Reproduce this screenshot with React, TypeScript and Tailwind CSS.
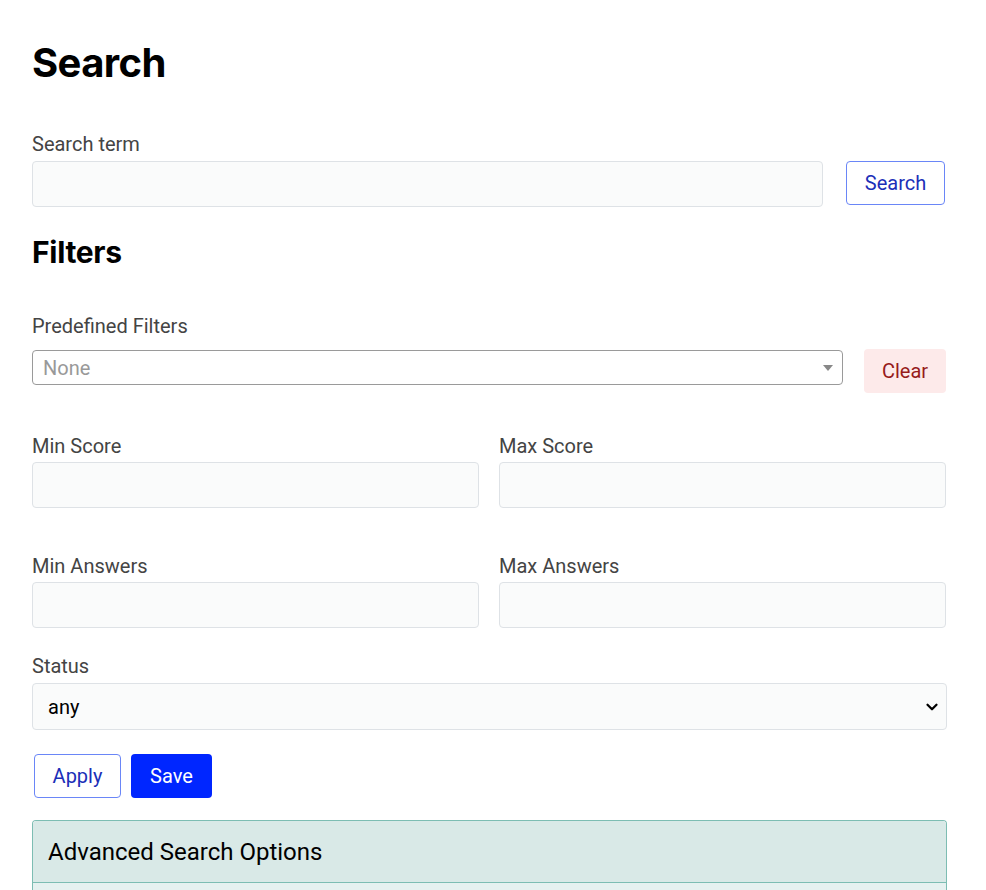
import { ChevronDown } from "lucide-react";

const body = { fontFamily: "Roboto, 'Liberation Sans', sans-serif" };
const heading = { fontFamily: "Inter, 'Liberation Sans', sans-serif" };

function Field({ label }: { label: string }) {
  return (
    <div className="flex flex-col">
      <label className="text-[20px] leading-6 text-[#444]">{label}</label>
      <input className="mt-[4px] h-[46px] rounded border border-[#dee2e6] bg-[#fafbfb] px-3 outline-none" />
    </div>
  );
}

export default function App() {
  return (
    <div className="min-h-screen bg-white px-8 pt-[39px]" style={body}>
      <h1 className="text-[40px] font-bold leading-[48px] tracking-[-0.6px] text-black" style={heading}>
        Search
      </h1>

      <div className="mt-[45px] text-[20px] leading-6 text-[#444]">Search term</div>
      <div className="mt-[5px] flex items-start">
        <input className="h-[46px] flex-1 rounded border border-[#dee2e6] bg-[#fafbfb] px-3 outline-none" />
        <button className="ml-[23px] mr-[9px] h-[44px] w-[99px] rounded border border-[#6a86f7] text-[20px] text-[#1c2fb8]">
          Search
        </button>
      </div>

      <h2 className="mt-[27px] text-[30px] font-bold leading-9 tracking-[-0.3px] text-black" style={heading}>
        Filters
      </h2>

      <div className="mt-[44px] text-[20px] leading-6 text-[#444]">Predefined Filters</div>
      <div className="mt-[12px] flex items-start">
        <div className="relative flex h-[35px] flex-1 items-center rounded border border-[#9a9a9a] px-[10px]">
          <span className="text-[20px] text-[#999]">None</span>
          <span className="absolute right-[9px] top-[14px] h-0 w-0 border-x-[5px] border-t-[6px] border-x-transparent border-t-[#888]" />
        </div>
        <button className="ml-[21px] mr-[8px] -mt-px h-[44px] w-[82px] rounded bg-[#fdeaea] text-[20px] text-[#971b1b]">
          Clear
        </button>
      </div>

      <div className="mt-[41px] grid grid-cols-2 gap-x-[20px] pr-[8px]">
        <Field label="Min Score" />
        <Field label="Max Score" />
      </div>

      <div className="mt-[46px] grid grid-cols-2 gap-x-[20px] pr-[8px]">
        <Field label="Min Answers" />
        <Field label="Max Answers" />
      </div>

      <div className="mt-[26px] pr-[7px]">
        <div className="text-[20px] leading-6 text-[#444]">Status</div>
        <div className="relative mt-[5px] flex h-[47px] items-center rounded border border-[#dee2e6] bg-[#fafbfb] pl-[15px]">
          <span className="text-[20px] text-black">any</span>
          <ChevronDown className="absolute right-[5px] top-[14px] h-[18px] w-[18px] text-black" strokeWidth={3} />
        </div>
      </div>

      <div className="mt-[24px] flex gap-[10px] pl-[2px]">
        <button className="h-[44px] w-[87px] rounded border border-[#6a86f7] text-[20px] text-[#1c2fb8]">
          Apply
        </button>
        <button className="h-[44px] w-[81px] rounded bg-[#0026ff] text-[20px] text-white">
          Save
        </button>
      </div>

      <div className="mr-[7px] mt-[22px] overflow-hidden rounded-t border border-b-0 border-[#7dbdb3]">
        <div className="flex h-[61px] items-center bg-[#d9e9e7] px-[15px] text-[24px] text-black">
          Advanced Search Options
        </div>
        <div className="h-[40px] border-t border-[#7dbdb3] bg-[#e6f1f0]" />
      </div>
    </div>
  );
}
